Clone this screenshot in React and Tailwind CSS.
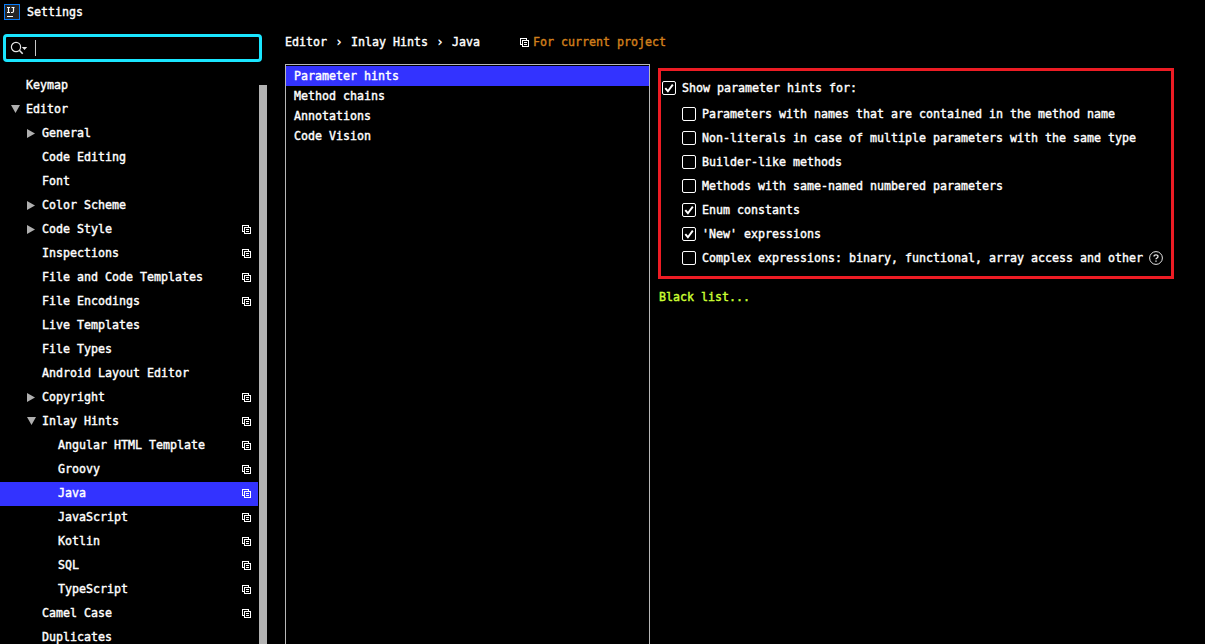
import React from "react";

const TREE = [
  { label: "Keymap", level: 0 },
  { label: "Editor", level: 0, arrow: "down" },
  { label: "General", level: 1, arrow: "right" },
  { label: "Code Editing", level: 1 },
  { label: "Font", level: 1 },
  { label: "Color Scheme", level: 1, arrow: "right" },
  { label: "Code Style", level: 1, arrow: "right", project: true },
  { label: "Inspections", level: 1, project: true },
  { label: "File and Code Templates", level: 1, project: true },
  { label: "File Encodings", level: 1, project: true },
  { label: "Live Templates", level: 1 },
  { label: "File Types", level: 1 },
  { label: "Android Layout Editor", level: 1 },
  { label: "Copyright", level: 1, arrow: "right", project: true },
  { label: "Inlay Hints", level: 1, arrow: "down", project: true },
  { label: "Angular HTML Template", level: 2, project: true },
  { label: "Groovy", level: 2, project: true },
  { label: "Java", level: 2, project: true, selected: true },
  { label: "JavaScript", level: 2, project: true },
  { label: "Kotlin", level: 2, project: true },
  { label: "SQL", level: 2, project: true },
  { label: "TypeScript", level: 2, project: true },
  { label: "Camel Case", level: 1, project: true },
  { label: "Duplicates", level: 1 },
];

const INDENT = ["pl-[10px]", "pl-[26px]", "pl-[42px]"];

const HINT_KINDS = ["Parameter hints", "Method chains", "Annotations", "Code Vision"];

const OPTIONS = [
  { label: "Parameters with names that are contained in the method name" },
  { label: "Non-literals in case of multiple parameters with the same type" },
  { label: "Builder-like methods" },
  { label: "Methods with same-named numbered parameters" },
  { label: "Enum constants", checked: true },
  { label: "'New' expressions", checked: true },
  { label: "Complex expressions: binary, functional, array access and other", help: true },
];

function ProjectIcon() {
  return (
    <svg width="9" height="9" viewBox="0 0 9 9" className="shrink-0" shapeRendering="crispEdges" fill="#fff">
      <path d="M0 0h7v2H6V1H1v5h1v1H0z" />
      <path fillRule="evenodd" d="M2 2h7v7H2zM3 3v5h5V3z" />
      <path d="M4 4h3v1H4zM4 6h3v1H4z" />
    </svg>
  );
}

function Arrow({ dir }) {
  return (
    <svg width="10" height="10" viewBox="0 0 10 10" className="shrink-0" fill="#afafaf">
      {dir === "down" && <path d="M1 1h9L5.5 9z" />}
      {dir === "right" && <path d="M1 1v9l8-4.5z" />}
    </svg>
  );
}

function Checkbox({ checked }) {
  return (
    <svg width="14" height="14" viewBox="0 0 14 14" className="shrink-0" fill="none" stroke="#fff">
      <rect x=".5" y=".5" width="13" height="13" rx="1.5" />
      {checked && <path d="M3.3 7.2l2.6 3L10.8 3.6" strokeWidth="1.9" />}
    </svg>
  );
}

function Sidebar() {
  return (
    <div className="flex w-[267px] shrink-0 flex-col pt-[10px]">
      <div className="ml-[3px] flex h-7 w-[259px] shrink-0 items-center rounded-[4px] border-[3px] border-[#1ae6ff] pl-[4px]">
        <svg width="18" height="14" viewBox="0 0 18 14" fill="none" stroke="#e6e6e6" className="shrink-0">
          <circle cx="6" cy="6" r="4.6" strokeWidth="1.2" />
          <path d="M9.3 9.3l3.4 3.4" strokeWidth="1.6" />
          <path d="M11.8 6h5.4L14.5 9z" fill="#e6e6e6" stroke="none" />
        </svg>
        <div className="ml-[7px] h-4 w-px bg-[#c8c8c8]" />
      </div>
      <div className="mt-[12px] flex">
        <div className="w-[258px]">
          {TREE.map((n) => (
            <div
              key={n.label}
              className={`flex h-6 items-center pr-[7px] pb-[2px] ${INDENT[n.level]} ${n.selected ? "bg-[#3333ff]" : ""}`}
            >
              <Arrow dir={n.arrow} />
              <span className="ml-[6px] flex-1">{n.label}</span>
              {n.project && (
                <span className="pt-px">
                  <ProjectIcon />
                </span>
              )}
            </div>
          ))}
        </div>
        <div className="ml-px mt-[11px] w-2 bg-[#b2b2b2]" />
      </div>
    </div>
  );
}

export default function App() {
  return (
    <div className="flex h-[644px] w-[1205px] flex-col overflow-hidden bg-black font-['DejaVu_Sans_Mono',monospace] text-[11.63px] leading-[20px] whitespace-pre text-white [-webkit-text-stroke:0.4px_currentColor]">
      <div className="flex h-6 shrink-0 items-center pl-1">
        <svg width="16" height="16" viewBox="0 0 16 16">
          <rect x=".5" y=".5" width="15" height="15" fill="#262626" stroke="#087cfa" />
          <path d="M3 3.5h3M4.5 3v6M3 8.5h3M7.5 3.5h3M9.5 3v4.3q0 1.2-1.2 1.2H7" stroke="#fff" strokeWidth="1.2" fill="none" />
          <path d="M3 12h6v1H3z" fill="#fff" />
        </svg>
        <span className="ml-[7px]">Settings</span>
      </div>
      <div className="flex min-h-0 flex-1">
        <Sidebar />
        <div className="flex flex-1 flex-col pl-[18px]">
          <div className="flex h-10 shrink-0 items-center pb-[4px]">
            <span>Editor</span>
            <span className="w-6 text-center">›</span>
            <span>Inlay Hints</span>
            <span className="w-6 text-center">›</span>
            <span>Java</span>
            <span className="ml-10 mr-[4px] pt-px">
              <ProjectIcon />
            </span>
            <span className="text-[#d17f1b]">For current project</span>
          </div>
          <div className="flex min-h-0 flex-1">
            <div className="w-[365px] shrink-0 border border-b-0 border-[#b8b8b8] pt-px">
              {HINT_KINDS.map((k, i) => (
                <div key={k} className={`h-5 pl-2 ${i === 0 ? "bg-[#3333ff]" : ""}`}>
                  {k}
                </div>
              ))}
            </div>
            <div className="ml-[8px] flex flex-col pt-[4px]">
              <div className="h-[211px] w-[516px] border-[3px] border-[#ed1c24] pl-px pt-[3px]">
                <div className="flex h-7 items-center gap-[6px]">
                  <Checkbox checked />
                  <span>Show parameter hints for:</span>
                </div>
                {OPTIONS.map((o) => (
                  <div key={o.label} className="flex h-6 items-center gap-[6px] pl-5">
                    <Checkbox checked={o.checked} />
                    <span>{o.label}</span>
                    {o.help && (
                      <svg width="14" height="14" viewBox="0 0 14 14" fill="none" stroke="#e6e6e6">
                        <circle cx="7" cy="7" r="6.4" />
                        <path d="M5 5.6Q5 3.8 7 3.8T9 5.5Q9 6.4 8 7T7 8.3" strokeWidth="1.3" />
                        <path d="M7 9.4v1.4" strokeWidth="1.4" />
                      </svg>
                    )}
                  </div>
                ))}
              </div>
              <div className="ml-px mt-[8px] text-[#ccff33]">Black list...</div>
            </div>
          </div>
        </div>
      </div>
    </div>
  );
}
